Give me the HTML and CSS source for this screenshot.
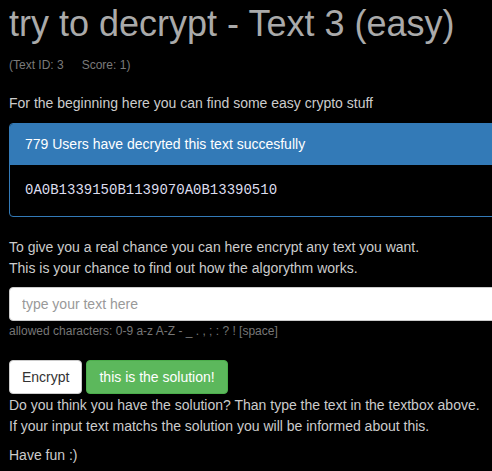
FILE: index.html
```html
<!DOCTYPE html>
<html lang="en">

<head>
  <meta charset="utf-8">
  <title>try to decrypt - Text 3 (easy)</title>

  <link rel="stylesheet" href="styles.css">
</head>

<body>
    <div class="container">

        <h1 class="title">try to decrypt - Text 3 (easy)</h1>
        <p class="meta">(Text ID: 3<span class="gap"></span>Score: 1)</p>

        <p class="intro">For the beginning here you can find some easy crypto stuff</p>

        <div class="panel">
            <div class="panel-heading">779 Users have decryted this text succesfully</div>
            <div class="panel-body">
                <code>0A0B1339150B1139070A0B13390510</code>
            </div>
        </div>

        <p class="hint">
            To give you a real chance you can here encrypt any text you want.<br>
            This is your chance to find out how the algorythm works.
        </p>

        <input type="text" class="form-control" placeholder="type your text here">
        <p class="help">allowed characters: 0-9 a-z A-Z - _ . , ; : ? ! [space]</p>

        <div class="buttons">
            <button class="btn btn-default">Encrypt</button>
            <button class="btn btn-success">this is the solution!</button>
        </div>

        <p class="hint hint-tight">
            Do you think you have the solution? Than type the text in the textbox above.<br>
            If your input text matchs the solution you will be informed about this.
        </p>

        <p class="hint hint-small">Have fun :)</p>

    </div>
</body>

</html>
```

FILE: styles.css
```css
html {
	overflow: hidden;
}

body {
	margin: 0px;
	background-color: #000;
	color: #ccc;
	font-family: "Liberation Sans", Arial, sans-serif;
	font-size: 14px;
	line-height: 1.5;
}

.container {
	width: 560px;
	padding-left: 9px;
}

.title {
	margin: 0px;
	padding-top: 2px;
	font-size: 36px;
	font-weight: normal;
	line-height: 44px;
	color: #aaa;
}

.meta {
	margin: 10px 0px 0px 0px;
	font-size: 12px;
	color: #7a7a7a;
}

.gap {
	display: inline-block;
	width: 18px;
}

.intro {
	margin: 19px 0px 0px 0px;
}

.panel {
	margin-top: 9px;
	border: 1px solid #337ab7;
	border-radius: 4px;
	overflow: hidden;
}

.panel-heading {
	background-color: #337ab7;
	color: #fff;
	padding: 0px 15px;
	height: 41px;
	line-height: 41px;
}

.panel-body {
	padding: 14px 15px 15px 15px;
}

.panel-body code {
	font-family: "Liberation Mono", "Courier New", monospace;
	font-size: 14px;
	color: #dde;
}

.hint {
	margin: 0px;
	margin-top: 20px;
	line-height: 21px;
}

.hint-tight {
	margin-top: 1px;
}

.hint-small {
	margin-top: 8px;
}

.form-control {
	display: block;
	box-sizing: border-box;
	width: 100%;
	height: 34px;
	margin-top: 8px;
	padding: 6px 12px;
	border: 1px solid #ccc;
	border-radius: 4px;
	background-color: #fff;
	font-family: inherit;
	font-size: 14px;
	color: #555;
}

.form-control::placeholder {
	color: #999;
}

.help {
	margin: 1px 0px 0px 0px;
	font-size: 12px;
	color: #777;
}

.buttons {
	margin-top: 20px;
	display: flex;
	gap: 4px;
}

.btn {
	height: 34px;
	padding: 6px 12px;
	border: 1px solid transparent;
	border-radius: 4px;
	font-family: inherit;
	font-size: 14px;
}

.btn-default {
	background-color: #fff;
	border-color: #ccc;
	color: #333;
}

.btn-success {
	background-color: #5cb85c;
	border-color: #4cae4c;
	color: #fff;
}
```
